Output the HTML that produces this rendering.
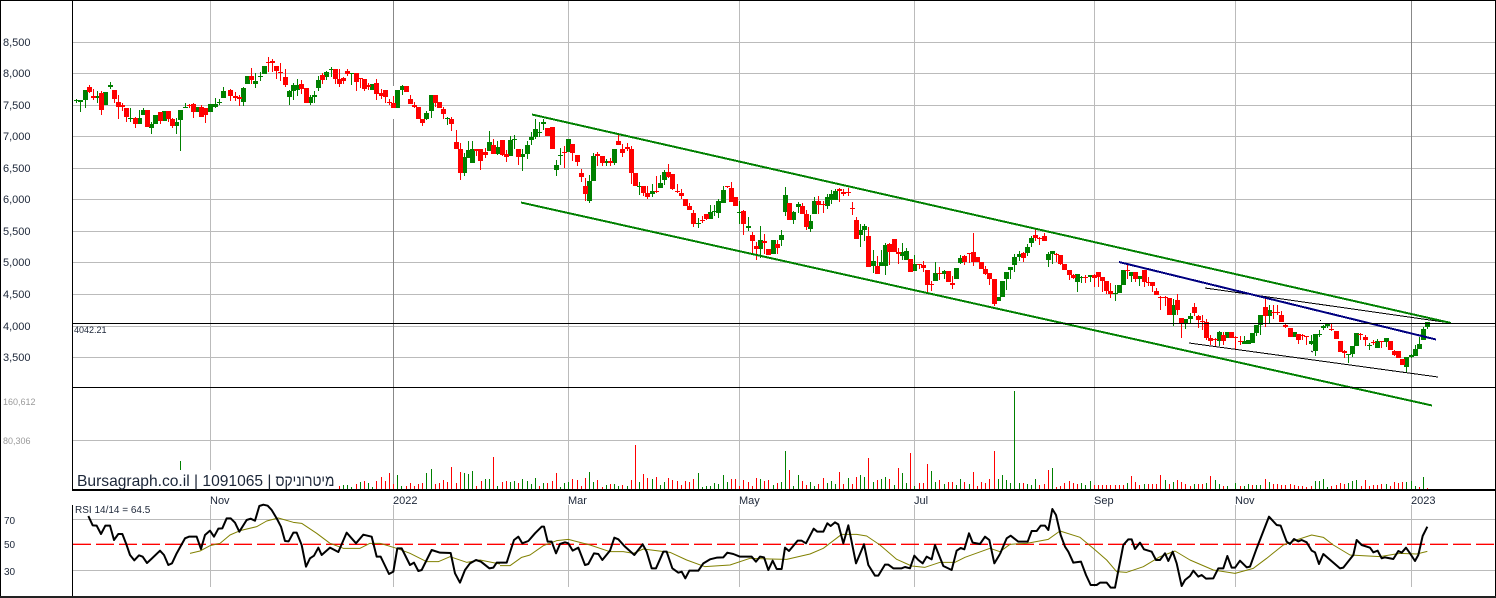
<!DOCTYPE html>
<html><head><meta charset="utf-8"><title>Bursagraph</title>
<style>
html,body{margin:0;padding:0;background:#fff;width:1496px;height:598px;overflow:hidden}
svg{display:block}
text{font-family:"Liberation Sans","DejaVu Sans",sans-serif;fill:#1c2638}
.a{font-size:11px}.v{font-size:9px;fill:#9a9a9a}.r{font-size:10px}
</style></head><body>
<svg width="1496" height="598" viewBox="0 0 1496 598" xmlns="http://www.w3.org/2000/svg">
<rect width="1496" height="598" fill="#fff"/>
<g shape-rendering="crispEdges" fill="none">
<!-- horizontal grid -->
<path stroke="#bbb" d="M72 42.5H1495M72 73.5H1495M72 105.5H1495M72 136.5H1495M72 168.5H1495M72 199.5H1495M72 231.5H1495M72 262.5H1495M72 294.5H1495M72 326.5H1495M72 357.5H1495M72 440.5H1495M72 519.5H1495M72 570.5H1495"/>
<!-- vertical grid -->
<path stroke="#bbb" d="M210.5 1V489M568.5 1V489M739.5 1V489M914.5 1V489M1094.5 1V489M1235.5 1V489M210.5 505V587M393.5 505V587M568.5 505V587M739.5 505V587M914.5 505V587M1094.5 505V587M1235.5 505V587M1411.5 505V587"/>
<path stroke="#888" d="M393.5 1V489M1411.5 1V489"/>
<path stroke="#fff" stroke-width="3" d="M393.5 86V119"/>
<!-- volume -->
<path stroke="#f00" d="M339.5 486V489M356.5 484V489M364.5 481V489M376.5 481V489M381.5 477V489M385.5 481V489M389.5 473V489M393.5 484V489M406.5 486V489M410.5 483V489M414.5 486V489M418.5 484V489M422.5 483V489M435.5 484V489M439.5 483V489M443.5 480V489M447.5 482V489M451.5 467V489M456.5 483V489M460.5 472V489M476.5 486V489M481.5 481V489M493.5 457V489M502.5 482V489M506.5 481V489M518.5 483V489M539.5 486V489M547.5 483V489M552.5 481V489M556.5 473V489M572.5 479V489M577.5 480V489M581.5 486V489M585.5 478V489M597.5 480V489M602.5 487V489M610.5 484V489M622.5 485V489M631.5 480V489M635.5 445V489M643.5 474V489M647.5 478V489M656.5 477V489M668.5 478V489M672.5 480V489M677.5 481V489M681.5 485V489M685.5 481V489M689.5 482V489M693.5 479V489M731.5 479V489M735.5 479V489M739.5 486V489M743.5 480V489M748.5 482V489M752.5 486V489M756.5 478V489M764.5 481V489M768.5 480V489M777.5 483V489M789.5 470V489M802.5 481V489M806.5 485V489M818.5 484V489M823.5 478V489M839.5 472V489M843.5 484V489M852.5 484V489M856.5 477V489M868.5 458V489M877.5 480V489M889.5 479V489M898.5 468V489M910.5 453V489M919.5 483V489M923.5 483V489M927.5 464V489M939.5 480V489M948.5 482V489M952.5 482V489M964.5 482V489M973.5 472V489M977.5 486V489M981.5 482V489M985.5 483V489M989.5 479V489M994.5 451V489M1023.5 483V489M1039.5 485V489M1044.5 484V489M1048.5 470V489M1056.5 487V489M1060.5 486V489M1064.5 483V489M1069.5 481V489M1073.5 483V489M1077.5 484V489M1094.5 485V489M1098.5 485V489M1102.5 485V489M1106.5 485V489M1110.5 485V489M1115.5 485V489M1119.5 485V489M1123.5 485V489M1131.5 476V489M1135.5 482V489M1139.5 485V489M1148.5 484V489M1152.5 484V489M1156.5 484V489M1160.5 475V489M1169.5 484V489M1177.5 480V489M1181.5 482V489M1185.5 484V489M1190.5 486V489M1198.5 484V489M1202.5 484V489M1210.5 476V489M1223.5 486V489M1240.5 486V489M1252.5 485V489M1265.5 479V489M1273.5 484V489M1277.5 484V489M1281.5 485V489M1285.5 485V489M1290.5 484V489M1294.5 485V489M1298.5 486V489M1302.5 486V489M1306.5 487V489M1311.5 486V489M1331.5 486V489M1336.5 485V489M1340.5 483V489M1344.5 484V489M1361.5 486V489M1365.5 480V489M1369.5 486V489M1373.5 485V489M1377.5 485V489M1381.5 484V489M1390.5 486V489M1394.5 482V489M1398.5 483V489M1402.5 482V489M1419.5 487V489M1427.5 488V489M285.5 470V471"/>
<path stroke="#008000" d="M180.5 461V470M343.5 485V489M347.5 485V489M351.5 487V489M360.5 482V489M368.5 483V489M372.5 487V489M397.5 475V489M401.5 486V489M426.5 473V489M431.5 469V489M464.5 473V489M468.5 474V489M472.5 471V489M485.5 479V489M489.5 479V489M497.5 486V489M510.5 482V489M514.5 481V489M522.5 479V489M527.5 481V489M531.5 484V489M535.5 478V489M543.5 483V489M560.5 487V489M564.5 483V489M568.5 482V489M589.5 472V489M593.5 482V489M606.5 485V489M614.5 484V489M618.5 486V489M627.5 486V489M639.5 482V489M652.5 479V489M660.5 485V489M664.5 482V489M698.5 473V489M702.5 487V489M706.5 486V489M710.5 486V489M714.5 483V489M718.5 484V489M723.5 475V489M727.5 482V489M760.5 479V489M773.5 485V489M781.5 482V489M785.5 451V489M793.5 486V489M798.5 475V489M810.5 482V489M814.5 486V489M827.5 483V489M831.5 481V489M835.5 484V489M848.5 478V489M860.5 475V489M864.5 477V489M873.5 482V489M881.5 479V489M885.5 477V489M894.5 485V489M902.5 473V489M906.5 483V489M914.5 486V489M931.5 471V489M935.5 482V489M944.5 484V489M956.5 485V489M960.5 479V489M969.5 484V489M998.5 479V489M1002.5 475V489M1006.5 480V489M1010.5 483V489M1014.5 391V489M1019.5 483V489M1027.5 484V489M1031.5 485V489M1035.5 479V489M1052.5 468V489M1081.5 483V489M1085.5 485V489M1090.5 481V489M1127.5 483V489M1144.5 484V489M1165.5 480V489M1173.5 482V489M1194.5 484V489M1206.5 483V489M1215.5 480V489M1219.5 484V489M1227.5 486V489M1235.5 483V489M1244.5 486V489M1248.5 484V489M1256.5 485V489M1260.5 485V489M1269.5 482V489M1315.5 481V489M1319.5 481V489M1323.5 479V489M1327.5 487V489M1348.5 483V489M1352.5 481V489M1356.5 480V489M1386.5 484V489M1406.5 482V489M1411.5 481V489M1415.5 486V489M1423.5 477V489"/>
</g>
<rect x="73" y="470" width="264" height="19" fill="#fff"/>
<g shape-rendering="crispEdges" fill="none">
<!-- wicks -->
<path stroke="#008000" d="M76.5 99V103M80.5 100V112M85.5 90V108M97.5 91V103M105.5 92V105M110.5 82V89M130.5 108V122M139.5 110V124M143.5 108V115M151.5 122V134M155.5 115V124M164.5 111V121M176.5 118V134M180.5 110V151M185.5 103V108M197.5 107V112M210.5 104V112M215.5 98V108M219.5 99V105M223.5 87V98M243.5 87V106M247.5 76V84M255.5 73V88M260.5 72V81M264.5 66V74M289.5 90V105M293.5 83V100M297.5 79V96M310.5 95V105M314.5 91V103M318.5 76V91M326.5 71V80M331.5 67V77M351.5 73V85M372.5 84V90M397.5 90V108M402.5 85V95M426.5 111V120M431.5 95V118M447.5 117V125M464.5 153V176M468.5 141V158M472.5 141V163M489.5 131V151M497.5 141V155M510.5 136V156M514.5 135V149M522.5 149V171M527.5 141V159M531.5 132V145M535.5 119V139M539.5 122V137M543.5 119V130M556.5 160V176M560.5 148V165M568.5 139V152M589.5 175V203M593.5 153V181M606.5 159V166M614.5 149V165M639.5 182V195M652.5 184V197M660.5 175V188M664.5 170V185M698.5 218V228M710.5 205V219M714.5 205V216M718.5 199V218M723.5 186V203M739.5 201V224M748.5 217V231M760.5 226V258M773.5 240V254M781.5 230V246M785.5 187V216M793.5 211V224M798.5 202V213M810.5 215V232M814.5 197V214M827.5 194V209M831.5 190V204M835.5 189V200M860.5 224V247M864.5 224V241M873.5 250V273M881.5 250V266M885.5 243V275M902.5 243V260M906.5 248V260M914.5 255V271M935.5 262V281M944.5 270V279M956.5 268V279M960.5 255V264M998.5 297V301M1002.5 281V297M1006.5 272V290M1010.5 267V279M1014.5 254V272M1019.5 251V261M1027.5 244V256M1031.5 236V247M1048.5 252V267M1052.5 251V264M1077.5 274V292M1081.5 276V283M1090.5 275V282M1115.5 285V301M1119.5 285V293M1123.5 270V285M1131.5 272V282M1139.5 276V286M1173.5 299V326M1185.5 319V329M1190.5 313V323M1219.5 331V346M1227.5 332V338M1244.5 336V344M1248.5 340V344M1252.5 333V343M1256.5 325V336M1260.5 315V335M1269.5 305V323M1294.5 332V337M1311.5 335V345M1315.5 334V356M1319.5 330V337M1323.5 325V330M1327.5 323V328M1348.5 354V363M1352.5 346V357M1356.5 333V346M1369.5 343V350M1377.5 339V348M1386.5 338V347M1406.5 357V373M1411.5 354V358M1415.5 345V356M1419.5 337V349M1423.5 327V340M1427.5 322V329"/>
<path stroke="#f00" d="M89.5 85V93M93.5 89V100M101.5 91V115M114.5 90V103M118.5 95V119M122.5 103V111M126.5 108V122M135.5 117V128M147.5 110V127M160.5 112V124M168.5 111V122M172.5 118V128M189.5 104V108M193.5 103V118M201.5 105V117M205.5 108V123M230.5 89V101M235.5 92V101M239.5 95V106M251.5 68V84M268.5 57V72M272.5 59V72M276.5 66V79M280.5 63V81M285.5 69V87M301.5 80V94M306.5 88V103M322.5 73V84M335.5 69V84M339.5 69V87M343.5 77V84M347.5 69V76M356.5 73V91M360.5 78V88M364.5 79V91M368.5 83V90M376.5 79V100M381.5 89V99M385.5 90V103M389.5 99V105M393.5 96V108M406.5 86V92M410.5 95V104M414.5 102V108M418.5 107V119M422.5 119V126M435.5 95V107M439.5 102V108M443.5 107V119M451.5 117V131M456.5 130V149M460.5 143V180M476.5 149V156M480.5 149V170M485.5 148V158M493.5 139V154M502.5 140V156M506.5 150V162M518.5 149V165M547.5 128V136M552.5 127V149M564.5 146V168M572.5 144V161M577.5 155V166M581.5 169V182M585.5 178V201M597.5 152V166M602.5 156V166M610.5 158V166M618.5 135V145M622.5 144V157M627.5 143V151M631.5 146V184M635.5 173V186M643.5 186V196M647.5 186V199M656.5 176V193M668.5 164V178M672.5 174V190M677.5 184V193M681.5 189V199M685.5 199V206M689.5 203V210M693.5 210V227M702.5 216V223M706.5 214V220M727.5 186V188M731.5 182V202M735.5 197V206M743.5 210V235M752.5 232V253M756.5 242V260M764.5 234V254M768.5 249V255M777.5 240V254M789.5 203V220M802.5 203V214M806.5 210V230M818.5 196V214M823.5 201V213M839.5 188V202M843.5 189V196M848.5 188V196M852.5 202V215M856.5 217V239M868.5 227V267M877.5 256V274M889.5 243V265M894.5 239V252M898.5 248V264M910.5 259V272M919.5 264V269M923.5 261V272M927.5 270V292M931.5 281V291M939.5 267V280M948.5 271V282M952.5 276V289M964.5 255V265M969.5 253V263M973.5 233V266M977.5 257V262M981.5 262V269M985.5 266V275M989.5 273V285M994.5 279V306M1023.5 252V262M1035.5 229V241M1039.5 237V245M1044.5 233V241M1056.5 253V262M1060.5 255V265M1064.5 264V270M1069.5 270V280M1073.5 274V279M1085.5 275V283M1094.5 274V287M1098.5 272V287M1102.5 277V292M1106.5 281V294M1110.5 283V298M1127.5 264V279M1135.5 272V282M1144.5 270V287M1148.5 277V286M1152.5 282V292M1156.5 288V295M1160.5 296V310M1165.5 296V306M1169.5 298V315M1177.5 294V315M1181.5 318V338M1194.5 303V316M1198.5 315V328M1202.5 315V330M1206.5 319V340M1210.5 335V345M1215.5 338V346M1223.5 332V345M1231.5 332V338M1235.5 336V349M1240.5 336V345M1265.5 298V327M1273.5 305V319M1277.5 305V315M1281.5 311V322M1285.5 324V328M1290.5 328V337M1298.5 334V344M1302.5 334V340M1306.5 336V345M1331.5 324V331M1336.5 331V339M1340.5 341V352M1344.5 350V358M1360.5 333V340M1365.5 335V346M1373.5 340V345M1381.5 341V348M1390.5 341V350M1394.5 350V356M1398.5 351V358M1402.5 359V365"/>
<!-- bodies -->
<path stroke="#008000" stroke-width="5" d="M76.5 100V101M80.5 100V102M85.5 90V100M97.5 96V98M105.5 92V105M110.5 85V87M130.5 118V119M139.5 118V124M143.5 110V115M151.5 124V128M155.5 115V124M164.5 111V121M176.5 122V126M180.5 110V120M185.5 107V108M197.5 107V112M210.5 104V112M215.5 104V107M219.5 102V103M223.5 91V98M243.5 88V102M247.5 76V84M255.5 81V84M260.5 76V77M264.5 66V74M289.5 91V97M293.5 85V91M297.5 85V90M310.5 97V103M314.5 95V97M318.5 80V88M326.5 72V77M331.5 69V70M351.5 73V74M372.5 84V90M397.5 90V108M402.5 86V90M426.5 113V119M431.5 95V111M447.5 118V119M464.5 157V173M468.5 150V158M472.5 149V163M489.5 142V151M497.5 147V154M510.5 140V156M514.5 139V140M522.5 154V157M527.5 145V154M531.5 137V140M535.5 129V137M539.5 132V133M543.5 122V124M556.5 165V170M560.5 155V156M568.5 139V152M589.5 181V201M593.5 156V181M606.5 161V163M614.5 149V163M639.5 186V187M652.5 191V194M660.5 183V188M664.5 172V180M698.5 223V224M710.5 212V219M714.5 211V212M718.5 201V213M723.5 190V203M739.5 212V213M748.5 226V228M760.5 240V249M773.5 240V254M781.5 235V240M785.5 195V212M793.5 212V220M798.5 204V207M810.5 221V229M814.5 201V214M827.5 197V206M831.5 194V200M835.5 191V200M860.5 230V235M864.5 226V230M873.5 261V266M881.5 262V266M885.5 245V266M902.5 252V256M906.5 251V260M914.5 264V271M935.5 273V281M944.5 271V274M956.5 268V279M960.5 258V263M998.5 297V301M1002.5 281V297M1006.5 272V279M1010.5 267V270M1014.5 257V265M1019.5 254V257M1027.5 247V253M1031.5 238V243M1048.5 254V260M1052.5 251V254M1077.5 274V282M1081.5 277V278M1090.5 275V277M1115.5 293V294M1119.5 285V293M1123.5 270V285M1131.5 272V276M1139.5 276V279M1173.5 305V315M1185.5 319V323M1190.5 316V319M1219.5 332V341M1227.5 332V338M1244.5 341V344M1248.5 340V344M1252.5 333V343M1256.5 325V333M1260.5 315V325M1269.5 310V316M1294.5 332V337M1311.5 341V344M1315.5 334V351M1319.5 334V335M1323.5 326V328M1327.5 324V326M1348.5 354V355M1352.5 346V354M1356.5 333V346M1369.5 345V346M1377.5 341V348M1386.5 338V342M1406.5 357V367M1411.5 355V357M1415.5 349V356M1419.5 344V349M1423.5 329V340M1427.5 322V327"/>
<path stroke="#f00" stroke-width="5" d="M89.5 87V92M93.5 96V98M101.5 93V110M114.5 90V99M118.5 102V107M122.5 105V107M126.5 108V117M135.5 118V124M147.5 110V127M160.5 112V121M168.5 111V119M172.5 119V126M189.5 105V106M193.5 104V112M201.5 107V117M205.5 108V115M230.5 90V96M235.5 96V98M239.5 97V99M251.5 76V80M268.5 62V63M272.5 61V63M276.5 66V71M280.5 72V73M285.5 77V85M301.5 84V89M306.5 88V103M322.5 75V80M335.5 69V79M339.5 79V84M343.5 78V81M347.5 71V74M356.5 73V82M360.5 78V79M364.5 79V89M368.5 85V87M376.5 83V94M381.5 93V96M385.5 90V97M389.5 102V103M393.5 103V108M406.5 86V92M410.5 99V104M414.5 105V107M418.5 107V119M422.5 119V123M435.5 95V103M439.5 102V108M443.5 109V114M451.5 119V124M456.5 142V149M460.5 149V173M476.5 149V151M480.5 149V161M485.5 152V155M493.5 145V154M502.5 140V155M506.5 154V157M518.5 149V157M547.5 128V136M552.5 127V149M564.5 152V153M572.5 144V153M577.5 155V162M581.5 173V177M585.5 186V194M597.5 154V156M602.5 156V163M610.5 161V163M618.5 141V145M622.5 149V153M627.5 147V149M631.5 149V173M635.5 173V186M643.5 186V193M647.5 193V197M656.5 191V192M668.5 172V177M672.5 174V189M677.5 191V192M681.5 193V196M685.5 199V206M689.5 206V210M693.5 213V224M702.5 220V221M706.5 214V219M727.5 186V187M731.5 188V202M735.5 197V206M743.5 211V224M752.5 235V241M756.5 246V249M764.5 241V243M768.5 249V255M777.5 244V248M789.5 203V220M802.5 206V214M806.5 214V227M818.5 201V205M823.5 204V205M839.5 189V191M843.5 192V194M848.5 192V193M852.5 208V209M856.5 220V239M868.5 236V267M877.5 266V274M889.5 244V252M894.5 239V252M898.5 252V254M910.5 259V272M919.5 264V265M923.5 265V268M927.5 270V285M931.5 284V285M939.5 273V274M948.5 271V282M952.5 283V285M964.5 256V262M969.5 253V254M973.5 252V262M977.5 257V262M981.5 262V269M985.5 269V274M989.5 273V279M994.5 279V304M1023.5 253V258M1035.5 235V238M1039.5 238V239M1044.5 236V241M1056.5 254V255M1060.5 255V264M1064.5 264V270M1069.5 270V275M1073.5 275V278M1085.5 277V278M1094.5 275V278M1098.5 272V277M1102.5 277V281M1106.5 281V291M1110.5 291V294M1127.5 270V271M1135.5 272V279M1144.5 270V282M1148.5 282V283M1152.5 282V286M1156.5 291V295M1160.5 297V298M1165.5 297V298M1169.5 298V315M1177.5 300V310M1181.5 318V323M1194.5 307V313M1198.5 316V320M1202.5 321V322M1206.5 322V338M1210.5 338V341M1215.5 339V340M1223.5 335V341M1231.5 332V338M1235.5 337V338M1240.5 341V342M1265.5 307V316M1273.5 312V313M1277.5 312V313M1281.5 315V322M1285.5 325V327M1290.5 328V337M1298.5 334V340M1302.5 335V336M1306.5 336V337M1331.5 329V330M1336.5 331V339M1340.5 341V352M1344.5 351V353M1360.5 334V335M1365.5 337V340M1373.5 342V343M1381.5 341V342M1390.5 341V350M1394.5 351V355M1398.5 351V358M1402.5 359V365"/>
<!-- trend lines -->
<path stroke="#000" d="M1205 288L1451 323M1189 343L1438 377M1320 320.5H1321M1311 351L1313 352"/>
<path stroke="#008000" stroke-width="2" d="M532 114.5L1451 323M521 202.5L1432 405.5"/>
<path stroke="#000080" stroke-width="2" d="M1119 262L1436 339.5"/>
<!-- frame -->
<path stroke="#000" d="M72.5 1V490M72.5 505V596M72 323.5H1495M72 387.5H1495M0.5 0V598M1495.5 0V598M0 0.5H1496"/>
<path stroke="#000" stroke-width="2" d="M72 490H1495"/>
<path stroke="#222" stroke-width="2" d="M0 597H1496"/>
<path stroke="#f00" stroke-width="1" stroke-dasharray="18 5" d="M73 544.5H1495"/>
<path stroke="#f00" stroke-width="1" stroke-dasharray="18 5" d="M73 543.5H1495" opacity=".35"/>
</g>
<!-- RSI -->
<g fill="none" stroke-linejoin="round">
<g transform="translate(0,380) scale(.33333)">
<polyline stroke="#808000" stroke-width="3" points="570,520 600,513 630,497 660,490 690,465 720,452 770,440 800,423 835,414 880,427 905,430 950,460 990,490 1030,505 1080,505 1110,490 1140,490 1190,505 1230,520 1280,545 1315,545 1350,530 1400,547 1440,540 1500,552"/>
<polyline stroke="#000" stroke-width="6" points="265,408 278,436 290,437 303,462 316,437 330,437 342,480 355,462 367,462 378,490 390,525 403,541 417,526 428,530 441,549 454,537 480,512 492,525 505,555 516,550 530,520 555,475 567,470 590,470 603,507 615,465 630,452 642,470 655,446 667,445 680,415 692,415 705,428 718,455 740,420 752,416 765,422 778,378 790,374 803,377 815,390 830,415 843,440 855,483 866,484 880,458 890,458 905,495 918,560 930,535 942,527 955,503 965,525 990,503 1015,516 1040,458 1068,490 1090,464 1115,470 1130,530 1142,530 1167,582 1180,575 1192,505 1205,505 1230,555 1242,548 1255,573 1265,570 1295,510 1320,518 1352,519 1365,580 1380,608 1395,570 1410,550 1428,540 1443,545 1468,565 1480,563 1490,548 1500,548"/>
</g>
<g transform="translate(500,480) scale(.33333)">
<polyline stroke="#808000" stroke-width="3" points="0,257 30,257 65,232 90,225 130,197 170,182 205,178 270,195 330,215 370,215 400,220 430,207 510,217 560,240 615,260 690,255 750,235 810,237 860,238 930,222 970,205 1025,163 1070,163 1100,168 1140,195 1190,238 1235,258 1275,262 1320,247 1365,247 1395,232 1470,205 1500,215"/>
<polyline stroke="#000" stroke-width="6" points="0,248 20,248 42,180 55,170 67,190 85,183 105,160 125,140 132,140 143,185 155,185 168,220 180,192 195,187 205,190 218,212 235,203 255,255 265,252 282,220 295,222 307,240 330,212 343,173 355,178 375,200 403,225 428,193 440,215 455,265 468,265 490,215 500,215 517,265 535,278 545,275 556,295 568,272 595,272 610,250 630,238 650,233 670,232 682,218 700,222 720,230 755,230 768,245 780,230 792,232 805,270 818,242 830,267 845,267 855,203 867,213 893,182 905,182 918,190 941,146 952,155 970,155 982,130 992,138 1005,127 1015,133 1030,190 1045,136 1068,250 1092,193 1105,255 1125,287 1135,287 1155,254 1165,254 1180,265 1205,265 1215,261 1230,265 1243,227 1255,240 1268,250 1280,230 1295,238 1305,195 1330,258 1355,270 1370,212 1382,204 1393,208 1407,160 1418,188 1440,192 1455,170 1468,180 1483,250 1500,222"/>
</g>
<g transform="translate(1000,480) scale(.33333)">
<polyline stroke="#808000" stroke-width="3" points="0,215 30,193 80,190 145,178 180,153 240,172 280,205 320,240 350,275 380,277 430,260 480,230 525,213 570,240 640,270 705,280 760,265 800,235 850,195 895,178 935,165 970,172 1000,195 1050,225 1140,230 1200,220 1250,222 1282,214"/>
<polyline stroke="#000" stroke-width="6" points="0,222 20,175 32,167 55,185 83,185 95,153 110,153 122,137 135,137 145,150 157,87 168,105 182,165 195,200 205,215 220,248 243,245 258,285 272,315 290,315 300,308 320,308 332,323 345,323 370,195 385,178 395,178 405,207 420,188 432,208 455,215 468,240 480,240 495,220 505,243 518,215 530,250 545,318 555,300 570,288 580,272 595,290 605,285 618,296 640,295 655,265 670,265 682,228 695,263 705,263 720,242 740,262 750,260 770,205 807,110 830,135 842,137 860,185 870,192 882,177 895,184 905,180 920,187 935,212 945,217 957,252 970,222 1000,248 1020,265 1030,263 1060,225 1070,180 1085,195 1110,203 1120,217 1133,212 1145,235 1155,232 1180,237 1195,213 1205,218 1218,203 1230,220 1245,243 1255,225 1268,168 1282,140"/>
</g>
</g>
<!-- labels -->
<text class="a" x="3" y="46">8,500</text>
<text class="a" x="3" y="77">8,000</text>
<text class="a" x="3" y="109">7,500</text>
<text class="a" x="3" y="140">7,000</text>
<text class="a" x="3" y="172">6,500</text>
<text class="a" x="3" y="203">6,000</text>
<text class="a" x="3" y="235">5,500</text>
<text class="a" x="3" y="266">5,000</text>
<text class="a" x="3" y="298">4,500</text>
<text class="a" x="3" y="330">4,000</text>
<text class="a" x="3" y="361">3,500</text>
<text class="v" x="3" y="405">160,612</text>
<text class="v" x="3" y="444">80,306</text>
<text style="font-size:9px" x="74" y="333">4042.21</text>
<text style="font-size:15.6px" x="77" y="486">Bursagraph.co.il | 1091065 |</text>
<text style="font-size:16px" transform="translate(275.5,486) scale(.86,1)">מיטרוניקס</text>
<text class="a" x="210" y="504">Nov</text>
<text class="a" x="393" y="504">2022</text>
<text class="a" x="568" y="504">Mar</text>
<text class="a" x="739" y="504">May</text>
<text class="a" x="914" y="504">Jul</text>
<text class="a" x="1094" y="504">Sep</text>
<text class="a" x="1235" y="504">Nov</text>
<text class="a" x="1411" y="504">2023</text>
<text class="r" x="75" y="513">RSI 14/14 = 64.5</text>
<text class="r" x="4" y="524">70</text>
<text class="r" x="4" y="548">50</text>
<text class="r" x="4" y="575">30</text>
</svg>
</body></html>
